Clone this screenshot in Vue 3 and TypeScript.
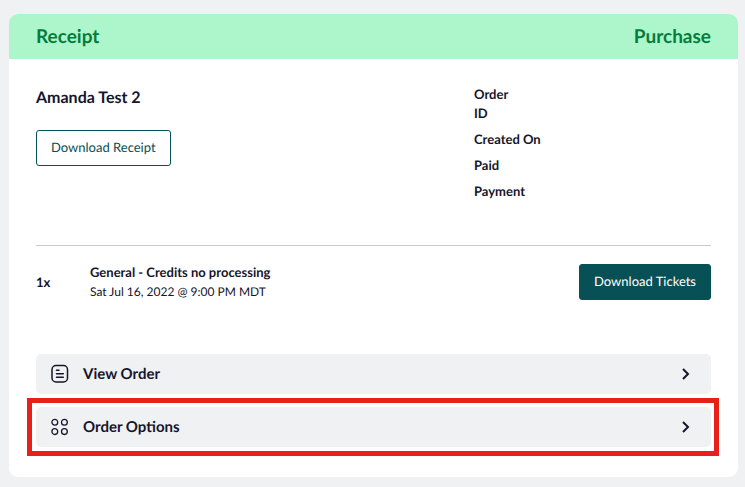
<script setup lang="ts">
interface Detail {
  lines: string[]
}

interface OrderItem {
  quantity: number
  name: string
  date: string
}

const details: Detail[] = [
  { lines: ['Order', 'ID'] },
  { lines: ['Created On'] },
  { lines: ['Paid'] },
  { lines: ['Payment'] },
]

const items: OrderItem[] = [
  { quantity: 1, name: 'General - Credits no processing', date: 'Sat Jul 16, 2022 @ 9:00 PM MDT' },
]
</script>

<template>
  <main class="page">
    <article class="card">
      <header class="card-header">
        <h1>Receipt</h1>
        <span>Purchase</span>
      </header>

      <div class="card-body">
        <section class="summary">
          <div class="customer">
            <h2>Amanda Test 2</h2>
            <button type="button" class="btn btn-outline">Download Receipt</button>
          </div>
          <dl class="details">
            <dt v-for="detail in details" :key="detail.lines[0]">
              <span v-for="line in detail.lines" :key="line">{{ line }}</span>
            </dt>
          </dl>
        </section>

        <section v-for="item in items" :key="item.name" class="item">
          <strong class="quantity">{{ item.quantity }}x</strong>
          <div class="item-text">
            <strong>{{ item.name }}</strong>
            <span class="date">{{ item.date }}</span>
          </div>
          <button type="button" class="btn btn-solid">Download Tickets</button>
        </section>

        <nav class="panels">
          <button type="button" class="panel">
            <svg class="icon" viewBox="0 0 18 20" fill="none" stroke="currentColor" stroke-width="1.5" stroke-linecap="round">
              <rect x="1" y="1.5" width="15.5" height="16.5" rx="4" />
              <path d="M5.5 6.3h2.5M5.5 9.8h6.8M5.5 13.3h6.8" />
            </svg>
            <span class="panel-label">View Order</span>
            <svg class="chevron" viewBox="0 0 8 12" fill="none" stroke="currentColor" stroke-width="2">
              <path d="M1 1l5 5-5 5" />
            </svg>
          </button>
          <button type="button" class="panel highlighted">
            <svg class="icon" viewBox="0 0 18 20" fill="none" stroke="currentColor" stroke-width="1.3">
              <circle cx="3.8" cy="5.2" r="2.9" />
              <circle cx="13.4" cy="5.2" r="2.9" />
              <circle cx="3.8" cy="14.6" r="2.9" />
              <circle cx="13.4" cy="14.6" r="2.9" />
            </svg>
            <span class="panel-label">Order Options</span>
            <svg class="chevron" viewBox="0 0 8 12" fill="none" stroke="currentColor" stroke-width="2">
              <path d="M1 1l5 5-5 5" />
            </svg>
          </button>
        </nav>
      </div>
    </article>
  </main>
</template>

<style>
body {
  margin: 0;
  background: #f0f1f3;
}
</style>

<style scoped>
.page {
  padding: 14px 7px 10px 9px;
  color: #15152b;
  font-family: Lato, "Liberation Sans", sans-serif;
  font-size: 13px;
  line-height: 19px;
  text-rendering: geometricPrecision;
}

.card {
  overflow: hidden;
  border-radius: 9px;
  background: #fff;
}

.card-header {
  display: flex;
  align-items: center;
  justify-content: space-between;
  height: 45px;
  padding: 0 27px;
  background: #adf6cc;
  color: #047d3c;
  font-size: 19px;
  font-weight: 700;
}

h1,
h2 {
  margin: 0;
  font-size: inherit;
}

.card-body {
  padding: 26px 27px 30px;
}

.summary {
  display: grid;
  grid-template-columns: 438fr 237fr;
  padding-bottom: 44px;
  border-bottom: 1px solid #c9c9d1;
}

.customer h2 {
  padding: 1px 0 21px;
  font-size: 16px;
  line-height: 23px;
}

.btn {
  box-sizing: border-box;
  height: 36px;
  padding: 0 14px 2px;
  border: 1px solid #075056;
  border-radius: 3px;
  font: inherit;
  text-rendering: inherit;
  cursor: pointer;
}

.btn-outline {
  background: #fff;
  color: #075056;
}

.btn-solid {
  background: #075056;
  color: #fff;
}

.details {
  display: flex;
  flex-direction: column;
  gap: 7px;
  margin: 0;
}

.details dt {
  font-weight: 700;
}

.details span {
  display: block;
}

.item {
  display: grid;
  grid-template-columns: 54px 1fr auto;
  align-items: center;
  padding-top: 17px;
}

.item-text {
  display: flex;
  flex-direction: column;
}

.date {
  font-size: 12px;
}

.panels {
  display: flex;
  flex-direction: column;
  gap: 13px;
  margin-top: 53px;
}

.panel {
  position: relative;
  display: flex;
  align-items: center;
  height: 40px;
  padding: 0 21px 0 15px;
  border: 0;
  border-radius: 5px;
  background: #f0f1f3;
  color: inherit;
  font: inherit;
  font-size: 15px;
  font-weight: 700;
  text-align: left;
  text-rendering: inherit;
  cursor: pointer;
}

.highlighted::after {
  position: absolute;
  inset: -9px -8px -9px -9px;
  border: 5px solid #e8201a;
  content: "";
}

.icon {
  width: 18px;
  height: 20px;
}

.panel-label {
  flex: 1;
  padding-left: 14px;
}

.chevron {
  width: 8px;
  height: 12px;
}
</style>
